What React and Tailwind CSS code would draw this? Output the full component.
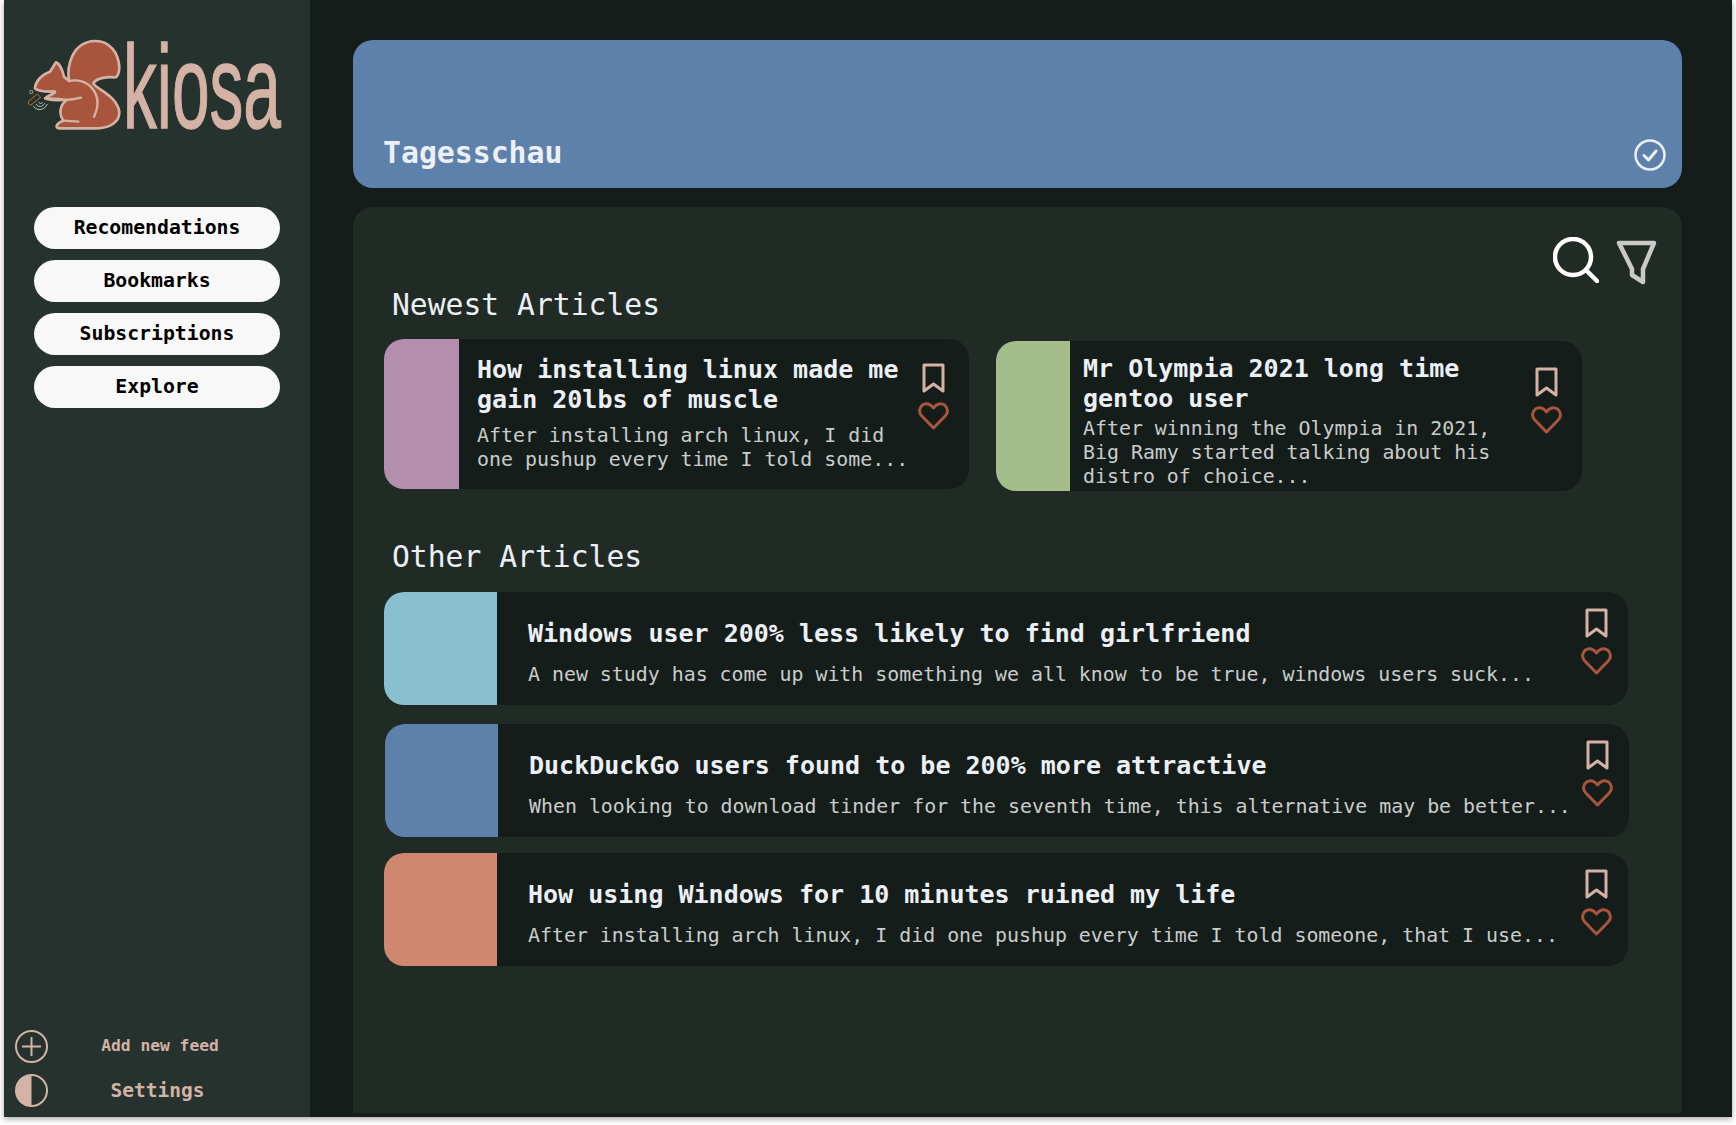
const nav = ['Recomendations', 'Bookmarks', 'Subscriptions', 'Explore'];

const Bookmark = () => (
  <svg width="23" height="30" viewBox="0 0 23 30" fill="none" stroke="#d4b2a5" strokeWidth="3" strokeLinejoin="round">
    <path d="M2 2h19v26l-9.5-7L2 28z" />
  </svg>
);

const Heart = () => (
  <svg width="31" height="28" viewBox="0 0 31 28" fill="none" stroke="#a9553e" strokeWidth="3" strokeLinejoin="round">
    <path d="M15.5 26 3.6 13.8C.6 10.600 1 5.500 4.500 3c3.500-2.400 8.300-1.400 11 3 2.700-4.400 7.500-5.400 11-3 3.500 2.500 3.900 7.600.9 10.800z" />
  </svg>
);

const Logo = () => (
  <svg className="mt-5 block" width="286" height="130" viewBox="12 0 858 390">
    {/* squirrel, its tail makes the S */}
    <path
      d="M105 205C105 190 120 165 150 155L168 127C178 130 188 150 192 170L207 183C200 140 215 65 285 63C330 62 355 100 358 140C358 160 352 172 345 172C325 170 290 172 280 190C285 205 350 225 358 275C360 305 330 325 290 325L180 325C165 325 165 312 190 302C175 280 180 255 200 240L175 237L135 235C145 225 165 222 165 215C140 215 115 215 105 205Z"
      fill="#a9553e"
      stroke="#d4b2a5"
      strokeWidth="8"
      strokeLinejoin="round"
    />
    <g fill="none" stroke="#d4b2a5" strokeWidth="7" strokeLinecap="round">
      <path d="M207 183C260 170 315 220 282 290" />
      <path d="M140 237C170 245 215 240 243 233" />
      <path d="M190 302L235 305" />
    </g>
    <g fill="none" strokeWidth="2.500">
      <path d="M86 244L112 222L122 232L92 256L86 252Z" stroke="#d0803f" />
      <path d="M100 258C108 272 132 274 142 252" stroke="#d8dcd8" />
      <path d="M108 252C114 262 128 262 134 250" stroke="#d8dcd8" />
      <path d="M116 246C120 252 124 252 128 246" stroke="#d8dcd8" />
      <rect x="90" y="212" width="8" height="8" stroke="#9aa29e" />
    </g>
    <text
      x="369"
      y="324"
      fontFamily="'Liberation Sans', sans-serif"
      fontSize="358"
      fill="#d4b2a5"
      stroke="#d4b2a5"
      strokeWidth="4"
      textLength="474"
      lengthAdjust="spacingAndGlyphs"
    >
      kiosa
    </text>
  </svg>
);

const Card = ({ color, title, desc, className, textClass, descClass, iconsClass }) => (
  <div className={`flex bg-[#151d1a] rounded-[20px] overflow-hidden ${className}`}>
    <div className={`shrink-0 ${color}`} />
    <div className={`flex-1 min-w-0 ${textClass}`}>
      <h3 className="text-[25px] leading-[30px] font-bold text-[#eceff4]">{title}</h3>
      <p className={`text-[19.900px] leading-6 text-[#c9cccb] ${descClass}`}>{desc}</p>
    </div>
    <div className={`shrink-0 flex flex-col items-center gap-[9px] w-[31px] ${iconsClass}`}>
      <Bookmark />
      <Heart />
    </div>
  </div>
);

const rows = [
  {
    color: 'w-[113px] bg-[#88c0d0]',
    title: 'Windows user 200% less likely to find girlfriend',
    desc: 'A new study has come up with something we all know to be true, windows users suck...',
    className: 'w-[1244px]',
  },
  {
    color: 'w-[113px] bg-[#5e81ac]',
    title: 'DuckDuckGo users found to be 200% more attractive',
    desc: 'When looking to download tinder for the seventh time, this alternative may be better...',
    className: 'w-[1244px] ml-px mt-[19px]',
  },
  {
    color: 'w-[113px] bg-[#d08770]',
    title: 'How using Windows for 10 minutes ruined my life',
    desc: 'After installing arch linux, I did one pushup every time I told someone, that I use...',
    className: 'w-[1244px] mt-4',
  },
];

export default function App() {
  return (
    <div className="w-[1736px] h-[1125px] bg-white pl-1 font-['DejaVu_Sans_Mono',monospace]">
      <div className="flex w-[1728px] h-[1117px] bg-[#151d1a] shadow-[0_2px_6px_rgba(0,0,0,0.35)]">
        <aside className="w-[306px] shrink-0 bg-[#25322d] flex flex-col">
          <Logo />
          <nav className="mt-[57px] px-[30px] flex flex-col gap-[11px]">
            {nav.map((item) => (
              <button
                key={item}
                className="h-[42px] rounded-full bg-[#f8f8f8] text-black text-[19.800px] font-bold"
              >
                {item}
              </button>
            ))}
          </nav>
          <div className="mt-auto pb-2.5 pl-[11px] pr-[43px] flex flex-col gap-[11px] text-[#d4b2a5]">
            <div className="flex items-center">
              <svg width="33" height="33" viewBox="0 0 33 33" fill="none" stroke="#d4b2a5" strokeWidth="2">
                <circle cx="16.500" cy="16.500" r="15.500" />
                <path d="M16.500 7v19M7 16.500h19" />
              </svg>
              <span className="flex-1 pl-[5px] text-center text-[16.300px] font-bold">Add new feed</span>
            </div>
            <div className="flex items-center">
              <svg width="33" height="33" viewBox="0 0 33 33" fill="none" stroke="#d4b2a5" strokeWidth="2">
                <circle cx="16.500" cy="16.500" r="15.500" />
                <path d="M16.500 1a15.500 15.500 0 0 0 0 31z" fill="#d4b2a5" stroke="none" />
              </svg>
              <span className="flex-1 text-center text-[19.500px] font-bold">Settings</span>
            </div>
          </div>
        </aside>

        <main className="flex-1 pl-[43px] pr-[50px] pt-10 pb-1 flex flex-col">
          <div className="h-[148px] shrink-0 rounded-[20px] bg-[#5e81ac] pl-[30px] pr-[16px] pb-[17px] flex items-end justify-between">
            <h1 className="text-[29.800px] leading-9 font-bold text-[#eceff4]">Tagesschau</h1>
            <svg width="32" height="32" viewBox="0 0 32 32" fill="none" stroke="#eceff4" strokeWidth="2.500" strokeLinecap="round" strokeLinejoin="round">
              <circle cx="16" cy="16" r="14.500" />
              <path d="M10 16.500l4.500 4.500L22 12" strokeWidth="3" />
            </svg>
          </div>

          <section className="flex-1 mt-[19px] rounded-t-[20px] bg-[#202b26] pt-[30px] pl-[31px]">
            <div className="h-[48px] flex justify-end gap-[17px] pr-[25px]">
              <svg width="46" height="46" viewBox="0 0 46 46" fill="none" stroke="#ffffff" strokeWidth="4.500" strokeLinecap="round">
                <circle cx="20" cy="20" r="18" />
                <path d="M33 33l11 11" />
              </svg>
              <svg className="mt-[3px]" width="41" height="45" viewBox="0 0 41 45" fill="none" stroke="#c8c9c8" strokeWidth="4.500" strokeLinejoin="round">
                <path d="M3 3h35L27 29v13l-11-7v-6z" />
              </svg>
            </div>

            <h2 className="mt-0.5 ml-2 text-[29.700px] leading-9 text-[#eceff4]">Newest Articles</h2>
            <div className="mt-4 flex items-start gap-[27px]">
              <Card
                color="w-[75px] bg-[#b48ead]"
                title="How installing linux made me gain 20lbs of muscle"
                desc="After installing arch linux, I did one pushup every time I told some..."
                className="w-[585px] h-[150px]"
                textClass="pl-[18px] pt-4"
                descClass="mt-[9px]"
                iconsClass="mr-5 pt-6"
              />
              <Card
                color="w-[74px] bg-[#a3be8c]"
                title="Mr Olympia 2021 long time gentoo user"
                desc="After winning the Olympia in 2021, Big Ramy started talking about his distro of choice..."
                className="w-[586px] h-[150px] mt-0.5"
                textClass="pl-[13px] pt-[13px]"
                descClass="mt-[3px]"
                iconsClass="mr-5 pt-[26px]"
              />
            </div>

            <h2 className="mt-12 ml-2 text-[29.700px] leading-9 text-[#eceff4]">Other Articles</h2>
            <div className="mt-[17px]">
              {rows.map((row) => (
                <Card
                  key={row.title}
                  {...row}
                  className={`${row.className} h-[113px]`}
                  textClass="pl-[31px] pt-[27px] whitespace-nowrap"
                  descClass="mt-[14px]"
                  iconsClass="mr-4 pt-4"
                />
              ))}
            </div>
          </section>
        </main>
      </div>
    </div>
  );
}
